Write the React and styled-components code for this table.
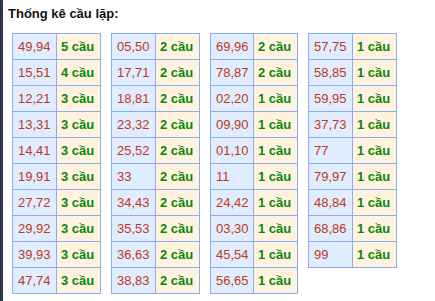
import React from 'react';
import { styled, createGlobalStyle } from 'styled-components';

const GlobalStyle = createGlobalStyle`
  html, body {
    margin: 0;
    padding: 0;
    background: #ffffff;
  }
  body {
    font-family: 'Liberation Sans', Arial, sans-serif;
  }
`;

const Page = styled.div`
  min-height: 301px;
  box-sizing: border-box;
  border-left: 3px solid #2f3549;
  padding: 6px 0 0 5px;
`;

const Title = styled.h3`
  margin: 0;
  font-size: 13px;
  line-height: 15px;
  font-weight: bold;
  color: #111;
`;

const Grid = styled.div`
  display: flex;
  align-items: flex-start;
  gap: 10px;
  margin-top: 12px;
  padding-left: 4px;
`;

const Table = styled.table`
  border-collapse: collapse;
  table-layout: fixed;
  font-size: 13px;
`;

const Cell = styled.td`
  height: 25px;
  padding: 0 0 0 ${(p) => (p.$num ? '5px' : '4px')};
  border: 1px solid #8aabf5;
  white-space: nowrap;
  background: ${(p) => (p.$num ? '#e0ecff' : '#fff3e0')};
  color: ${(p) => (p.$num ? '#c2381a' : '#0a870a')};
  font-weight: ${(p) => (p.$num ? 'normal' : 'bold')};
  vertical-align: middle;
`;

const tables = [
  {
    w: 44,
    rows: [
      ['49,94', 5], ['15,51', 4], ['12,21', 3], ['13,31', 3], ['14,41', 3],
      ['19,91', 3], ['27,72', 3], ['29,92', 3], ['39,93', 3], ['47,74', 3],
    ],
  },
  {
    w: 44,
    rows: [
      ['05,50', 2], ['17,71', 2], ['18,81', 2], ['23,32', 2], ['25,52', 2],
      ['33', 2], ['34,43', 2], ['35,53', 2], ['36,63', 2], ['38,83', 2],
    ],
  },
  {
    w: 43,
    rows: [
      ['69,96', 2], ['78,87', 2], ['02,20', 1], ['09,90', 1], ['01,10', 1],
      ['11', 1], ['24,42', 1], ['03,30', 1], ['45,54', 1], ['56,65', 1],
    ],
  },
  {
    w: 44,
    rows: [
      ['57,75', 1], ['58,85', 1], ['59,95', 1], ['37,73', 1], ['77', 1],
      ['79,97', 1], ['48,84', 1], ['68,86', 1], ['99', 1],
    ],
  },
];

function App() {
  return (
    <>
      <GlobalStyle />
      <Page>
        <Title>Thống kê cầu lặp:</Title>
        <Grid>
          {tables.map((t, i) => (
            <Table key={i} style={{ width: t.w + 45 }}>
              <colgroup>
                <col style={{ width: t.w }} />
                <col style={{ width: 44 }} />
              </colgroup>
              <tbody>
                {t.rows.map(([pair, n]) => (
                  <tr key={pair}>
                    <Cell $num>{pair}</Cell>
                    <Cell>{n} cầu</Cell>
                  </tr>
                ))}
              </tbody>
            </Table>
          ))}
        </Grid>
      </Page>
    </>
  );
}

export default App;
